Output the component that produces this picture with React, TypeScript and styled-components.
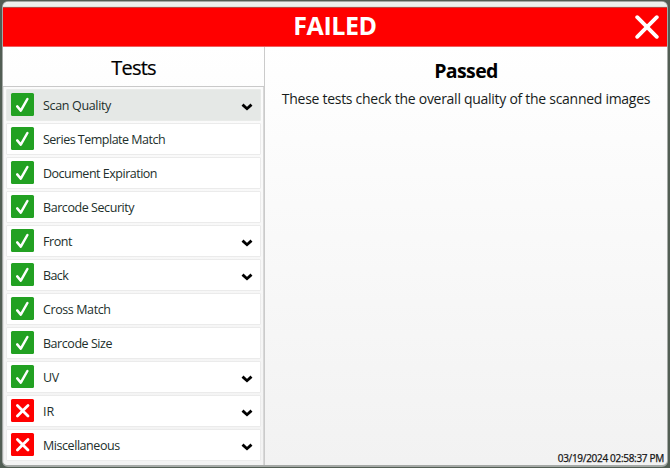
import React from 'react';
import styled, { createGlobalStyle } from 'styled-components';

const GlobalStyle = createGlobalStyle`
  * { box-sizing: border-box; }
  body { margin: 0; background: #525e54; font-family: "Open Sans", "Noto Sans", sans-serif; }
`;

const Desktop = styled.div`
  width: 670px;
  height: 468px;
  padding: 1px 2px 1px 2px;
  background: #525e54;
  overflow: hidden;
`;

const Window = styled.main`
  height: 466px;
  display: flex;
  flex-direction: column;
  border: 1px solid #a5a9a6;
  border-bottom-width: 2px;
  border-radius: 6px;
  overflow: hidden;
  background: linear-gradient(#ffffff 40px, #f2f2f2);
`;

const TopStrip = styled.div`
  height: 5px;
  flex: none;
  background: #edf1ed;
  border-bottom: 1px solid #dfe5df;
`;

const Banner = styled.header`
  height: 40px;
  flex: none;
  display: grid;
  grid-template-columns: 40px 1fr 40px;
  align-items: center;
  justify-items: center;
  background: #ff0000;
  border-top: 1px solid #b84a42;
  border-bottom: 1px solid #f06060;
`;

const BannerTitle = styled.h1`
  grid-column: 2;
  margin: 0;
  padding-bottom: 3px;
  color: #fff;
  font-size: 25px;
  line-height: 35px;
  font-weight: 700;
  letter-spacing: -0.4px;
`;

const CloseButton = styled.button`
  width: 24px;
  height: 24px;
  padding: 0;
  border: 0;
  background: none;
  display: flex;
`;

const Body = styled.div`
  flex: 1;
  display: flex;
  min-height: 0;
`;

const Sidebar = styled.nav`
  width: 262px;
  flex: none;
  display: flex;
  flex-direction: column;
  border-right: 1px solid #cbcbcb;
`;

const SidebarTitle = styled.h2`
  margin: 0;
  height: 40px;
  flex: none;
  text-align: center;
  color: #000;
  font-size: 20px;
  font-weight: 400;
  line-height: 41px;
  letter-spacing: -0.8px;
  -webkit-text-stroke: 0.2px #000;
  border-bottom: 1px solid #c9c9c9;
`;

const TestList = styled.ul`
  flex: 1;
  list-style: none;
  margin: 0;
  padding: 2px 2px 0 2px;
  display: flex;
  flex-direction: column;
  gap: 2px;
  border-right: 1px solid #d8d8d8;
  border-left: 1px solid #e2e2e2;
  background: linear-gradient(#fbfbfb, #f3f3f3);
`;

const TestRow = styled.li<{ $selected?: boolean }>`
  height: 32px;
  flex: none;
  display: flex;
  align-items: flex-start;
  padding: 3px 7px 0 4px;
  border: 1px solid ${(p) => (p.$selected ? '#e9ebe9' : '#ebebeb')};
  border-radius: 1px;
  background: ${(p) => (p.$selected ? '#e5e8e6' : '#fff')};
`;

const StatusBadge = styled.span<{ $failed?: boolean }>`
  width: 23px;
  height: 23px;
  flex: none;
  display: flex;
  border-radius: 1.5px;
  background: ${(p) => (p.$failed ? '#ff0000' : '#22a122')};
`;

const TestName = styled.span<{ $tracking: number }>`
  flex: 1;
  margin-top: 4px;
  margin-left: 9px;
  color: #222f2c;
  font-size: 12.5px;
  line-height: 18px;
  white-space: nowrap;
  letter-spacing: ${(p) => p.$tracking}px;
`;

const Chevron = styled.svg`
  width: 12px;
  height: 8px;
  margin-top: 10px;
`;

const Details = styled.section`
  flex: 1;
  display: flex;
  flex-direction: column;
  align-items: center;
`;

const ResultTitle = styled.h2`
  margin: 10px 0 0;
  color: #000;
  font-size: 19.5px;
  line-height: 28px;
  font-weight: 700;
  letter-spacing: -0.6px;
`;

const Description = styled.p`
  margin: 4px 0 0;
  color: #171c1b;
  font-size: 14px;
  line-height: 20px;
  white-space: nowrap;
  letter-spacing: -0.28px;
`;

const Timestamp = styled.time`
  margin: auto 3px 0 auto;
  color: #151515;
  font-size: 10px;
  line-height: 14px;
  letter-spacing: -0.3px;
  -webkit-text-stroke: 0.25px #151515;
`;

interface Test {
  name: string;
  tracking: number;
  failed?: boolean;
  expandable?: boolean;
  selected?: boolean;
}

const tests: Test[] = [
  { name: 'Scan Quality', tracking: -0.34, expandable: true, selected: true },
  { name: 'Series Template Match', tracking: -0.5 },
  { name: 'Document Expiration', tracking: -0.49 },
  { name: 'Barcode Security', tracking: -0.43 },
  { name: 'Front', tracking: -0.45, expandable: true },
  { name: 'Back', tracking: -0.6, expandable: true },
  { name: 'Cross Match', tracking: -0.4 },
  { name: 'Barcode Size', tracking: -0.45 },
  { name: 'UV', tracking: -0.3, expandable: true },
  { name: 'IR', tracking: -0.1, failed: true, expandable: true },
  { name: 'Miscellaneous', tracking: -0.44, failed: true, expandable: true },
];

const StatusIcon = ({ failed }: { failed?: boolean }) => (
  <StatusBadge $failed={failed}>
    <svg width="23" height="23" viewBox="0 0 23 23" fill="none" stroke="#fff" strokeLinecap="round">
      {failed ? (
        <path d="M6.4 6.4 17 17M17 6.4 6.4 17" strokeWidth="2.8" />
      ) : (
        <path d="M6.2 13.4 9.8 17.6 16.4 6" strokeWidth="2.5" strokeLinejoin="round" />
      )}
    </svg>
  </StatusBadge>
);

export default function App() {
  return (
    <Desktop>
      <GlobalStyle />
      <Window>
        <TopStrip />
        <Banner>
          <BannerTitle>FAILED</BannerTitle>
          <CloseButton aria-label="Close">
            <svg width="24" height="24" viewBox="0 0 24 24" stroke="#fff" strokeWidth="3.8" strokeLinecap="round">
              <path d="M2.2 2.2 21.8 21.8M21.8 2.2 2.2 21.8" />
            </svg>
          </CloseButton>
        </Banner>
        <Body>
          <Sidebar>
            <SidebarTitle>Tests</SidebarTitle>
            <TestList>
              {tests.map((t) => (
                <TestRow key={t.name} $selected={t.selected}>
                  <StatusIcon failed={t.failed} />
                  <TestName $tracking={t.tracking}>{t.name}</TestName>
                  {t.expandable && (
                    <Chevron viewBox="0 0 12 8" fill="none" stroke="#000" strokeWidth="2.8">
                      <path d="M1.5 1.6 6 5.7 10.5 1.6" />
                    </Chevron>
                  )}
                </TestRow>
              ))}
            </TestList>
          </Sidebar>
          <Details>
            <ResultTitle>Passed</ResultTitle>
            <Description>These tests check the overall quality of the scanned images</Description>
            <Timestamp>03/19/2024 02:58:37 PM</Timestamp>
          </Details>
        </Body>
      </Window>
    </Desktop>
  );
}
